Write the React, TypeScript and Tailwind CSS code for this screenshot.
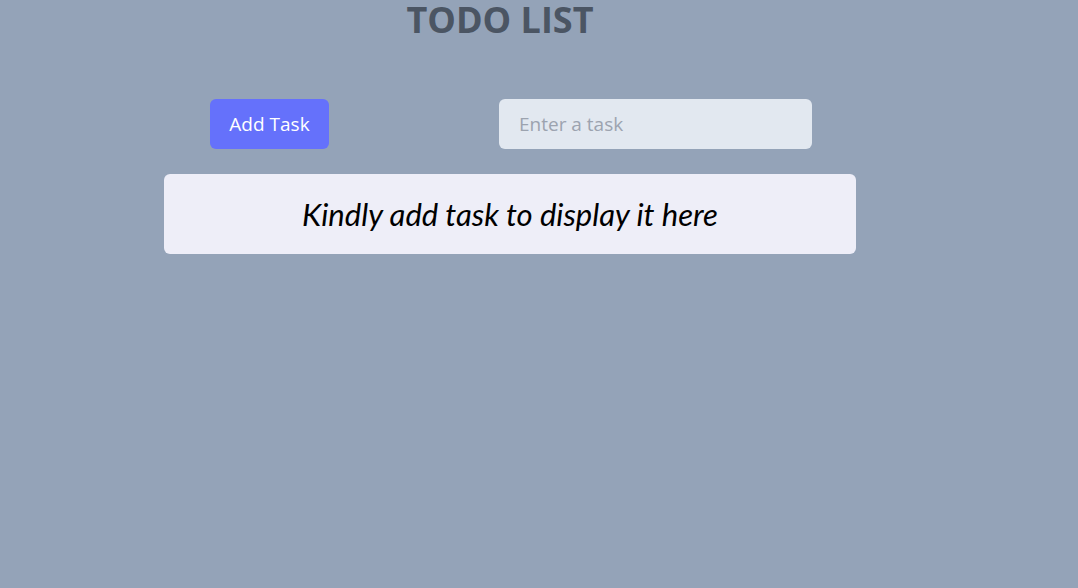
import { useState } from 'react'

export default function App() {
  const [task, setTask] = useState('')
  const [tasks, setTasks] = useState<string[]>([])

  const addTask = () => {
    if (!task.trim()) return
    setTasks([...tasks, task.trim()])
    setTask('')
  }

  return (
    <div className="min-h-screen w-full bg-[#94a3b8] font-['Open_Sans',sans-serif]">
      <div className="w-[692px] ml-[164px]">
        <h1 className="text-center text-4xl font-bold text-[#4b5563] mr-[20px] leading-10">TODO LIST</h1>

        <div className="flex items-center mt-[59px]">
          <button
            onClick={addTask}
            className="ml-[46px] h-[50px] w-[119px] rounded-md bg-[#6571fb] text-[19px] text-white"
          >
            Add Task
          </button>
          <input
            value={task}
            onChange={(e) => setTask(e.target.value)}
            placeholder="Enter a task"
            className="ml-[170px] h-[50px] w-[313px] rounded-md bg-[#e2e8f0] pl-5 text-[19px] text-gray-700 placeholder:text-[#9ca3af] outline-none"
          />
        </div>

        <div className="mt-[25px] rounded-md bg-[#eeeef8] min-h-[80px] flex flex-col items-center justify-center">
          {tasks.length === 0 ? (
            <p className="italic text-[31px] text-black font-['Lato',sans-serif]">Kindly add task to display it here</p>
          ) : (
            tasks.map((t, i) => (
              <p key={i} className="text-lg text-black py-1">{t}</p>
            ))
          )}
        </div>
      </div>
    </div>
  )
}
